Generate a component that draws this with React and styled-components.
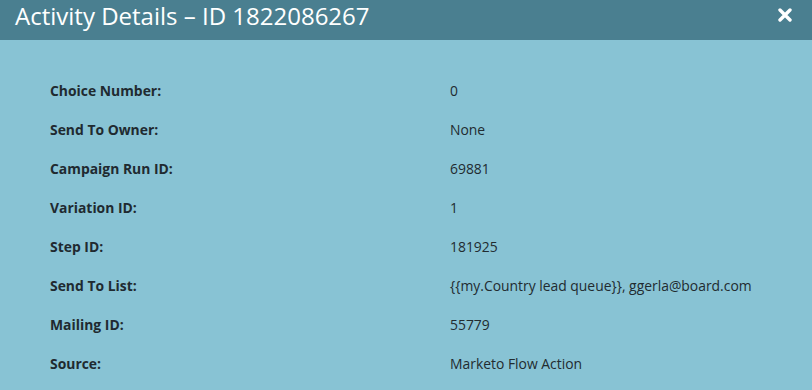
import React from "react";
import styled, { createGlobalStyle } from "styled-components";

const rows = [
  ["Choice Number:", "0"],
  ["Send To Owner:", "None"],
  ["Campaign Run ID:", "69881"],
  ["Variation ID:", "1"],
  ["Step ID:", "181925"],
  ["Send To List:", "{{my.Country lead queue}}, ggerla@board.com"],
  ["Mailing ID:", "55779"],
  ["Source:", "Marketo Flow Action"],
];

const App = () => {
  return (
    <>
      <GlobalStyle />
      <Dialog>
        <TitleBar>
          <Title>Activity Details – ID 1822086267</Title>
          <CloseButton aria-label="Close">
            <svg width="14" height="14" viewBox="0 0 14 14">
              <path
                d="M2 2 L12 12 M12 2 L2 12"
                stroke="#fff"
                strokeWidth="3.4"
                strokeLinecap="round"
              />
            </svg>
          </CloseButton>
        </TitleBar>
        <Body>
          {rows.map(([label, value]) => (
            <Row key={label}>
              <Label>{label}</Label>
              <Value>{value}</Value>
            </Row>
          ))}
        </Body>
      </Dialog>
    </>
  );
};

const GlobalStyle = createGlobalStyle`
  html, body {
    margin: 0;
    padding: 0;
    background: #88c3d4;
  }
  * { box-sizing: border-box; }
`;

const Dialog = styled.div`
  width: 812px;
  height: 390px;
  background: #88c3d4;
  font-family: "Open Sans", "Noto Sans", sans-serif;
  overflow: hidden;
`;

const TitleBar = styled.div`
  height: 40px;
  background: #4a7f90;
  display: flex;
  align-items: flex-start;
  justify-content: space-between;
  padding: 0 20px 0 15px;
`;

const Title = styled.h1`
  margin: 0;
  font-size: 24px;
  font-weight: 400;
  color: #ffffff;
  line-height: 32px;
`;

const CloseButton = styled.button`
  border: 0;
  background: transparent;
  padding: 0;
  display: flex;
  cursor: pointer;
  margin-top: 8px;
`;

const Body = styled.div`
  padding: 31px 0 0 50px;
  display: flex;
  flex-direction: column;
`;

const Row = styled.div`
  display: grid;
  grid-template-columns: 400px 1fr;
  height: 39px;
  align-items: center;
`;

const Label = styled.span`
  font-size: 13.9px;
  font-weight: 700;
  color: #1f2a30;
`;

const Value = styled.span`
  font-size: 13.9px;
  color: #222b30;
`;

export default App;
